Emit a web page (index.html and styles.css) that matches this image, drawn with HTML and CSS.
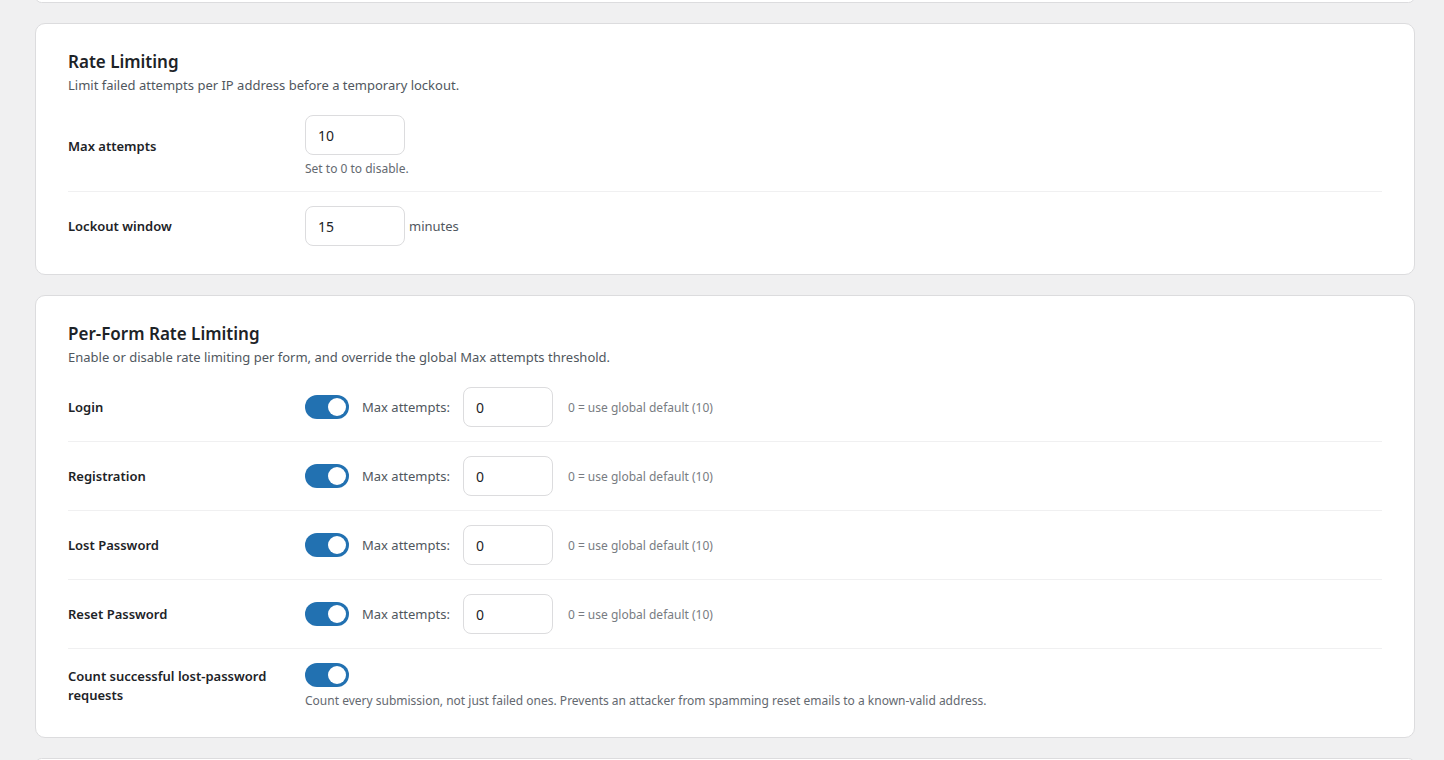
FILE: index.html
```html
<!DOCTYPE html>
<html lang="en">
<head>
    <meta charset="UTF-8">
    <meta name="viewport" content="width=device-width, initial-scale=1.0">
    <title>Security Settings</title>
    <link rel="stylesheet" href="styles.css">
</head>
<body>
    <div class="wrap">
        <div class="card card-stub"></div>

        <!-- Rate Limiting -->
        <section class="card">
            <h2 class="card-title">Rate Limiting</h2>
            <p class="card-desc">Limit failed attempts per IP address before a temporary lockout.</p>

            <div class="row">
                <div class="row-label">Max attempts</div>
                <div class="row-field">
                    <input type="text" class="num-input" value="10">
                    <p class="help">Set to 0 to disable.</p>
                </div>
            </div>

            <div class="row">
                <div class="row-label">Lockout window</div>
                <div class="row-field inline">
                    <input type="text" class="num-input" value="15">
                    <span class="unit">minutes</span>
                </div>
            </div>
        </section>

        <!-- Per-Form Rate Limiting -->
        <section class="card">
            <h2 class="card-title">Per-Form Rate Limiting</h2>
            <p class="card-desc">Enable or disable rate limiting per form, and override the global Max attempts threshold.</p>

            <div class="row">
                <div class="row-label">Login</div>
                <div class="row-field form-line">
                    <label class="toggle"><input type="checkbox" checked><span class="track"></span></label>
                    <span class="field-label">Max attempts:</span>
                    <input type="text" class="num-input small" value="0">
                    <span class="hint">0 = use global default (10)</span>
                </div>
            </div>

            <div class="row">
                <div class="row-label">Registration</div>
                <div class="row-field form-line">
                    <label class="toggle"><input type="checkbox" checked><span class="track"></span></label>
                    <span class="field-label">Max attempts:</span>
                    <input type="text" class="num-input small" value="0">
                    <span class="hint">0 = use global default (10)</span>
                </div>
            </div>

            <div class="row">
                <div class="row-label">Lost Password</div>
                <div class="row-field form-line">
                    <label class="toggle"><input type="checkbox" checked><span class="track"></span></label>
                    <span class="field-label">Max attempts:</span>
                    <input type="text" class="num-input small" value="0">
                    <span class="hint">0 = use global default (10)</span>
                </div>
            </div>

            <div class="row">
                <div class="row-label">Reset Password</div>
                <div class="row-field form-line">
                    <label class="toggle"><input type="checkbox" checked><span class="track"></span></label>
                    <span class="field-label">Max attempts:</span>
                    <input type="text" class="num-input small" value="0">
                    <span class="hint">0 = use global default (10)</span>
                </div>
            </div>

            <div class="row">
                <div class="row-label">Count successful lost-password requests</div>
                <div class="row-field">
                    <label class="toggle"><input type="checkbox" checked><span class="track"></span></label>
                    <p class="help">Count every submission, not just failed ones. Prevents an attacker from spamming reset emails to a known-valid address.</p>
                </div>
            </div>
        </section>

        <div class="card card-stub"></div>
    </div>
</body>
</html>
```

FILE: styles.css
```css
* {
    margin: 0;
    padding: 0;
    box-sizing: border-box;
}

html, body {
    background: #f0f0f1;
    color: #1d2327;
    font-family: 'Noto Sans', 'Open Sans', sans-serif;
    font-size: 13px;
    overflow: hidden;
}

.wrap {
    width: 1380px;
    margin: -10px 0 0 35px;
    display: flex;
    flex-direction: column;
    gap: 20px;
}

/* cards */
.card {
    background: #fff;
    border: 1px solid #dcdcde;
    border-radius: 10px;
    padding: 26px 32px 14px;
}

.card-stub {
    height: 13px;
    padding: 0;
}

.card-title {
    font-size: 17px;
    font-weight: 600;
    line-height: 24px;
}

.card-desc {
    color: #50575e;
    font-size: 13px;
    line-height: 20px;
    margin-top: 1px;
    margin-bottom: 6px;
}

/* rows */
.row {
    display: grid;
    grid-template-columns: 237px 1fr;
    align-items: center;
    padding: 14px 0;
    border-bottom: 1px solid #f0f0f1;
}

.row:last-child {
    border-bottom: none;
}

.row-label {
    font-weight: 600;
    font-size: 13px;
    line-height: 19px;
    padding-right: 20px;
}

.row-field.inline,
.row-field.form-line {
    display: flex;
    align-items: center;
}

.form-line {
    gap: 13px;
}

.num-input {
    width: 100px;
    height: 40px;
    border: 1px solid #dcdcde;
    border-radius: 8px;
    padding: 0 12px;
    font-family: inherit;
    font-size: 14px;
    color: #1d2327;
    background: #fff;
    outline: none;
}

.num-input.small {
    width: 90px;
}

.unit {
    margin-left: 4px;
    color: #50575e;
}

.field-label {
    color: #50575e;
}

.hint {
    color: #787c82;
    font-size: 12px;
    margin-left: 2px;
}

.help {
    color: #646970;
    font-size: 12px;
    line-height: 16px;
    margin-top: 6px;
}

/* toggle switch */
.toggle {
    display: inline-block;
    position: relative;
    width: 44px;
    height: 24px;
    vertical-align: middle;
}

.toggle input {
    display: none;
}

.track {
    display: block;
    width: 44px;
    height: 24px;
    border-radius: 12px;
    background: #dcdcde;
    position: relative;
}

.track::after {
    content: "";
    position: absolute;
    top: 3px;
    left: 3px;
    width: 18px;
    height: 18px;
    border-radius: 50%;
    background: #fff;
}

.toggle input:checked + .track {
    background: #2271b1;
}

.toggle input:checked + .track::after {
    left: 23px;
}
```
